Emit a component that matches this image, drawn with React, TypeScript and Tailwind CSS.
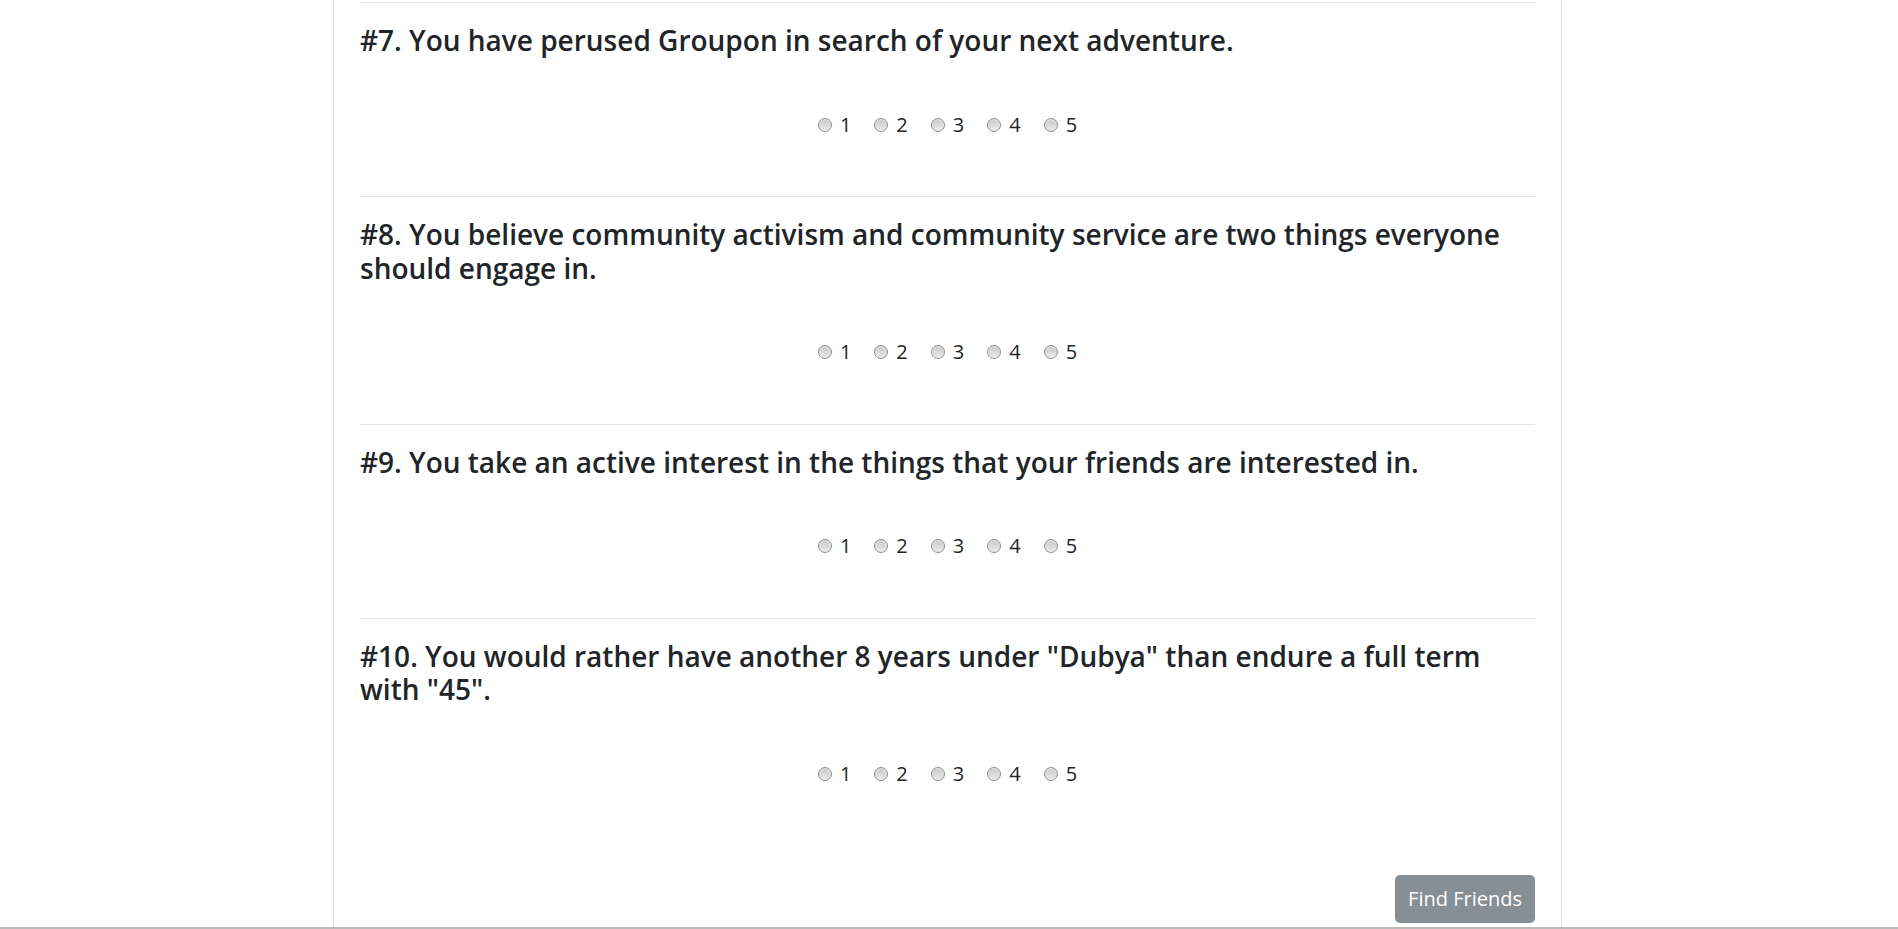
import React from 'react';

const questions = [
  { n: 7, text: 'You have perused Groupon in search of your next adventure.' },
  { n: 8, text: 'You believe community activism and community service are two things everyone should engage in.' },
  { n: 9, text: 'You take an active interest in the things that your friends are interested in.' },
  { n: 10, text: 'You would rather have another 8 years under "Dubya" than endure a full term with "45".' },
];

const Radio: React.FC = () => (
  <span className="inline-block w-[14px] h-[14px] rounded-full border border-[#8f8f8f] bg-gradient-to-b from-[#c6c6c6] to-[#ededed] shadow-[inset_0_1px_1px_rgba(255,255,255,0.6)]" />
);

const Question: React.FC<{ n: number; text: string }> = ({ n, text }) => (
  <div className="border-t border-[#e6e6e6] pt-[21px] pb-[56.5px]">
    <h3 className="text-[28px] leading-[1.2] font-semibold text-[#212529]">
      #{n}. {text}
    </h3>
    <div className="mt-[52px] h-[30px] flex items-center justify-center text-[20px] text-[#212529]">
      {[1, 2, 3, 4, 5].map((v) => (
        <label key={v} className="flex items-center mr-[23px] last:mr-0">
          <Radio />
          <span className="ml-[8px] leading-[30px]">{v}</span>
        </label>
      ))}
    </div>
  </div>
);

const App: React.FC = () => {
  return (
    <div
      className="h-[929px] bg-white flex flex-col overflow-hidden"
      style={{ fontFamily: '"Open Sans", "Noto Sans", "Liberation Sans", sans-serif' }}
    >
      <div className="flex-1 overflow-hidden">
        <div className="ml-[333px] w-[1229px] h-full border-x border-[#dedede] px-[26px] pt-[2px]">
          {questions.map((q) => (
            <Question key={q.n} n={q.n} text={q.text} />
          ))}
          <div className="flex justify-end mt-[29px]">
            <button className="h-[48px] px-[13px] rounded-[5px] bg-[#868e96] text-white text-[20px] leading-[30px]">
              Find Friends
            </button>
          </div>
        </div>
      </div>
      <div className="h-[2px] bg-[#b9b9b9]" />
    </div>
  );
};

export default App;
